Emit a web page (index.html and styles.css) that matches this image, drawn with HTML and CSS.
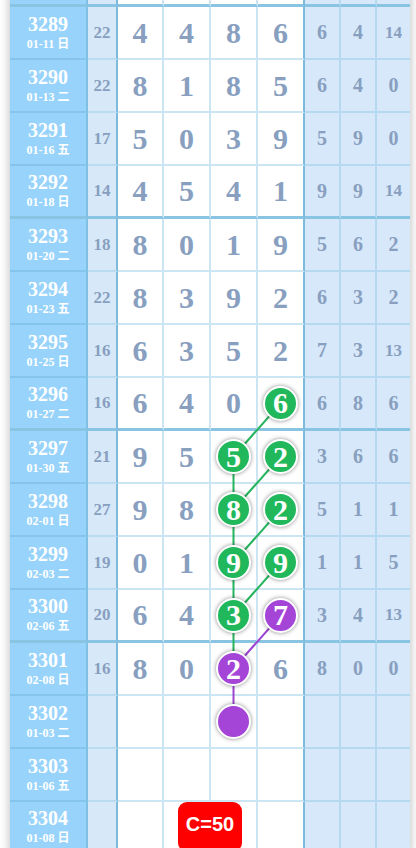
FILE: index.html
```html
<!DOCTYPE html>
<html lang="zh">
<head>
<meta charset="utf-8">
<title>走势图</title>
<link rel="stylesheet" href="styles.css">
</head>
<body>
<div class="page">
  <div class="table">
    <div class="row grp"><div class="c-date"></div><div class="c-sum"></div><div class="c-d"></div><div class="c-d"></div><div class="c-d"></div><div class="c-d"></div><div class="c-r"></div><div class="c-r"></div><div class="c-r"></div></div>

    <div class="row"><div class="c-date"><b>3289</b><span>01-11 日</span></div><div class="c-sum">22</div><div class="c-d">4</div><div class="c-d">4</div><div class="c-d">8</div><div class="c-d">6</div><div class="c-r">6</div><div class="c-r">4</div><div class="c-r sm">14</div></div>
    <div class="row"><div class="c-date"><b>3290</b><span>01-13 二</span></div><div class="c-sum">22</div><div class="c-d">8</div><div class="c-d">1</div><div class="c-d">8</div><div class="c-d">5</div><div class="c-r">6</div><div class="c-r">4</div><div class="c-r">0</div></div>
    <div class="row"><div class="c-date"><b>3291</b><span>01-16 五</span></div><div class="c-sum">17</div><div class="c-d">5</div><div class="c-d">0</div><div class="c-d">3</div><div class="c-d">9</div><div class="c-r">5</div><div class="c-r">9</div><div class="c-r">0</div></div>
    <div class="row grp"><div class="c-date"><b>3292</b><span>01-18 日</span></div><div class="c-sum">14</div><div class="c-d">4</div><div class="c-d">5</div><div class="c-d">4</div><div class="c-d">1</div><div class="c-r">9</div><div class="c-r">9</div><div class="c-r sm">14</div></div>

    <div class="row"><div class="c-date"><b>3293</b><span>01-20 二</span></div><div class="c-sum">18</div><div class="c-d">8</div><div class="c-d">0</div><div class="c-d">1</div><div class="c-d">9</div><div class="c-r">5</div><div class="c-r">6</div><div class="c-r">2</div></div>
    <div class="row"><div class="c-date"><b>3294</b><span>01-23 五</span></div><div class="c-sum">22</div><div class="c-d">8</div><div class="c-d">3</div><div class="c-d">9</div><div class="c-d">2</div><div class="c-r">6</div><div class="c-r">3</div><div class="c-r">2</div></div>
    <div class="row"><div class="c-date"><b>3295</b><span>01-25 日</span></div><div class="c-sum">16</div><div class="c-d">6</div><div class="c-d">3</div><div class="c-d">5</div><div class="c-d">2</div><div class="c-r">7</div><div class="c-r">3</div><div class="c-r sm">13</div></div>
    <div class="row grp"><div class="c-date"><b>3296</b><span>01-27 二</span></div><div class="c-sum">16</div><div class="c-d">6</div><div class="c-d">4</div><div class="c-d">0</div><div class="c-d"><i class="ball g">6</i></div><div class="c-r">6</div><div class="c-r">8</div><div class="c-r">6</div></div>

    <div class="row"><div class="c-date"><b>3297</b><span>01-30 五</span></div><div class="c-sum">21</div><div class="c-d">9</div><div class="c-d">5</div><div class="c-d"><i class="ball g">5</i></div><div class="c-d"><i class="ball g">2</i></div><div class="c-r">3</div><div class="c-r">6</div><div class="c-r">6</div></div>
    <div class="row"><div class="c-date"><b>3298</b><span>02-01 日</span></div><div class="c-sum">27</div><div class="c-d">9</div><div class="c-d">8</div><div class="c-d"><i class="ball g">8</i></div><div class="c-d"><i class="ball g">2</i></div><div class="c-r">5</div><div class="c-r">1</div><div class="c-r">1</div></div>
    <div class="row"><div class="c-date"><b>3299</b><span>02-03 二</span></div><div class="c-sum">19</div><div class="c-d">0</div><div class="c-d">1</div><div class="c-d"><i class="ball g">9</i></div><div class="c-d"><i class="ball g">9</i></div><div class="c-r">1</div><div class="c-r">1</div><div class="c-r">5</div></div>
    <div class="row grp"><div class="c-date"><b>3300</b><span>02-06 五</span></div><div class="c-sum">20</div><div class="c-d">6</div><div class="c-d">4</div><div class="c-d"><i class="ball g">3</i></div><div class="c-d"><i class="ball p">7</i></div><div class="c-r">3</div><div class="c-r">4</div><div class="c-r sm">13</div></div>

    <div class="row"><div class="c-date"><b>3301</b><span>02-08 日</span></div><div class="c-sum">16</div><div class="c-d">8</div><div class="c-d">0</div><div class="c-d"><i class="ball p">2</i></div><div class="c-d">6</div><div class="c-r">8</div><div class="c-r">0</div><div class="c-r">0</div></div>
    <div class="row"><div class="c-date"><b>3302</b><span>01-03 二</span></div><div class="c-sum"></div><div class="c-d"></div><div class="c-d"></div><div class="c-d"><i class="ball p"></i></div><div class="c-d"></div><div class="c-r"></div><div class="c-r"></div><div class="c-r"></div></div>
    <div class="row"><div class="c-date"><b>3303</b><span>01-06 五</span></div><div class="c-sum"></div><div class="c-d"></div><div class="c-d"></div><div class="c-d"></div><div class="c-d"></div><div class="c-r"></div><div class="c-r"></div><div class="c-r"></div></div>
    <div class="row grp"><div class="c-date"><b>3304</b><span>01-08 日</span></div><div class="c-sum"></div><div class="c-d"></div><div class="c-d"></div><div class="c-d"></div><div class="c-d"></div><div class="c-r"></div><div class="c-r"></div><div class="c-r"></div></div>

    <svg class="lines" width="400" height="901" viewBox="0 0 400 901">
      <g stroke="#25b35d" stroke-width="2" fill="none">
        <line x1="270.5" y1="449.5" x2="223.5" y2="502.5"/>
        <line x1="223.5" y1="502.5" x2="223.5" y2="555.5"/>
        <line x1="270.5" y1="502.5" x2="223.5" y2="555.5"/>
        <line x1="223.5" y1="555.5" x2="223.5" y2="608.5"/>
        <line x1="270.5" y1="555.5" x2="223.5" y2="608.5"/>
        <line x1="223.5" y1="608.5" x2="223.5" y2="661.5"/>
        <line x1="270.5" y1="608.5" x2="223.5" y2="661.5"/>
        <line x1="223.5" y1="661.5" x2="223.5" y2="714.5"/>
      </g>
      <g stroke="#9b45d2" stroke-width="2" fill="none">
        <line x1="270.5" y1="661.5" x2="223.5" y2="714.5"/>
        <line x1="223.5" y1="714.5" x2="223.5" y2="767.5"/>
      </g>
    </svg>

    <div class="badge">C=50</div>
  </div>
</div>
</body>
</html>
```

FILE: styles.css
```css
html, body {
  margin: 0;
  padding: 0;
  overflow: hidden;
  background: #ffffff;
}

.page {
  padding-left: 10px;
  width: 400px;
}

.table {
  position: relative;
  margin-top: -46px;
  width: 400px;
  box-shadow: 0 0 10px rgba(0, 0, 0, 0.28);
  font-family: "Liberation Serif", "Noto Sans CJK SC", serif;
  font-weight: bold;
}

.row {
  display: grid;
  grid-template-columns: 78px 30px 46px 47px 47px 47px 36px 36px 33px;
  height: 53px;
}

.row > div {
  box-sizing: border-box;
  display: flex;
  align-items: center;
  justify-content: center;
  border-bottom: 2px solid #cbe5f3;
  color: #889fbf;
}

.c-date {
  flex-direction: column;
  background: #98d3fb;
  border-right: 2px solid #80c0e3;
  color: #ffffff !important;
  border-bottom-color: #86c5ea !important;
}

.c-date b {
  font-size: 20px;
  line-height: 21px;
}

.c-date span {
  font-size: 12px;
  line-height: 15px;
  margin-top: 2px;
}

.c-sum {
  background: #d7e9f9;
  border-right: 2px solid #7db9dd;
  font-size: 17px;
  border-bottom-color: #b9dcf0 !important;
}

.c-d {
  background: #ffffff;
  border-right: 2px solid #cbe5f3;
  font-size: 30px;
}

.row > .c-d:nth-child(6) {
  border-right-color: #7db9dd;
}

.c-r {
  background: #d6e8f9;
  border-right: 2px solid #b5daef;
  font-size: 20px;
  border-bottom-color: #b5daef !important;
}

.row > .c-r:last-child {
  border-right: 0;
}

.c-r.sm {
  font-size: 17px;
}

.row.grp > div {
  border-bottom: 3px solid #8ac4e3 !important;
}

.ball {
  position: relative;
  z-index: 2;
  box-sizing: border-box;
  width: 35px;
  height: 35px;
  border-radius: 50%;
  border: 2px solid #ffffff;
  box-shadow: 0 0 4px rgba(0, 0, 0, 0.45);
  display: flex;
  align-items: center;
  justify-content: center;
  color: #ffffff;
  font-style: normal;
  font-size: 30px;
  line-height: 1;
}

.ball.g {
  background: #21b85c;
}

.ball.p {
  background: #a445d8;
}

.lines {
  position: absolute;
  left: 0;
  top: 0;
  z-index: 1;
  pointer-events: none;
}

.badge {
  position: absolute;
  left: 168px;
  top: 848px;
  z-index: 3;
  width: 64px;
  height: 50px;
  border-radius: 9px;
  background: #ff0000;
  color: #ffffff;
  font-family: "Liberation Sans", Arial, sans-serif;
  font-size: 20px;
  line-height: 44px;
  text-align: center;
  font-weight: bold;
}
```
